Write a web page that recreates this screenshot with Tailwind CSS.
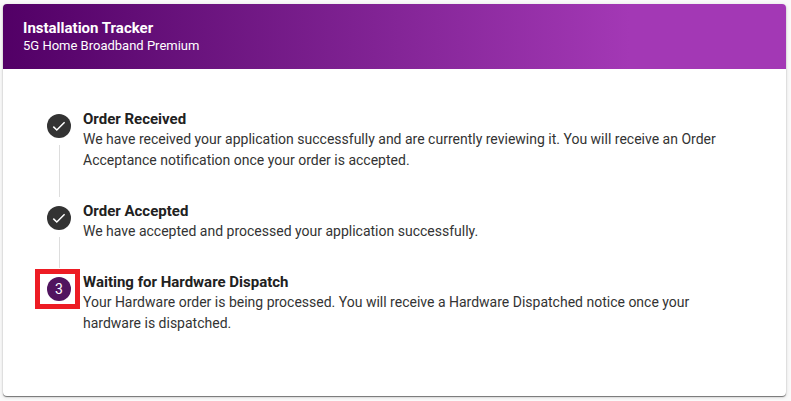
<!DOCTYPE html>
<html lang="en">
<head>
    <meta charset="UTF-8">
    <meta name="viewport" content="width=device-width, initial-scale=1.0">
    <title>Installation Tracker</title>
    <script src="https://cdn.jsdelivr.net/npm/@tailwindcss/browser@4"></script>
</head>
<body class="bg-[#fafafa] font-[Roboto,sans-serif] text-[#333333]">

    <main class="pt-1 pb-1 pl-[3px] pr-[5px]">
        <section class="bg-white rounded-sm overflow-hidden shadow-[0_1px_1px_rgba(0,0,0,0.5),0_1px_4px_rgba(0,0,0,0.15)]">

            <header class="bg-linear-to-r from-[#520066] to-[#a338b5] to-80% text-white px-5 pt-[14px] pb-[15px]">
                <h1 class="text-[15px] leading-5 font-bold">Installation Tracker</h1>
                <p class="text-[13px] leading-4">5G Home Broadband Premium</p>
            </header>

            <!-- Steps -->
            <ol class="pt-10 px-11 pb-8">
                <li class="flex gap-3">
                    <div class="flex flex-col items-center pt-[5px]">
                        <span class="size-6 shrink-0 rounded-full bg-[#333333] flex items-center justify-center">
                            <svg class="size-4" viewBox="0 0 16 16" fill="none" stroke="white" stroke-width="1.5" aria-label="Completed"><path d="M2.3 8.6 L5.8 12 L13.6 4.2"/></svg>
                        </span>
                        <span class="w-px grow bg-[#dddddd] mt-[7px] mb-1"></span>
                    </div>
                    <div class="pb-[30px]">
                        <h2 class="text-[15px] leading-5 font-bold text-[#212121]">Order Received</h2>
                        <p class="text-sm leading-[21px]">We have received your application successfully and are currently reviewing it. You will receive an Order Acceptance notification once your order is accepted.</p>
                    </div>
                </li>
                <li class="flex gap-3">
                    <div class="flex flex-col items-center pt-[5px]">
                        <span class="size-6 shrink-0 rounded-full bg-[#333333] flex items-center justify-center">
                            <svg class="size-4" viewBox="0 0 16 16" fill="none" stroke="white" stroke-width="1.5" aria-label="Completed"><path d="M2.3 8.6 L5.8 12 L13.6 4.2"/></svg>
                        </span>
                        <span class="w-px grow bg-[#dddddd] mt-[7px] mb-1"></span>
                    </div>
                    <div class="pb-[30px]">
                        <h2 class="text-[15px] leading-5 font-bold text-[#212121]">Order Accepted</h2>
                        <p class="text-sm leading-[21px]">We have accepted and processed your application successfully.</p>
                    </div>
                </li>
                <li class="flex gap-3">
                    <div class="pt-[5px]">
                        <span class="relative size-6 rounded-full bg-[#51145f] text-white text-sm flex items-center justify-center">
                            3
                            <span class="absolute -inset-y-2 -left-3 -right-[9px] border-5 border-[#ed1c24]"></span>
                        </span>
                    </div>
                    <div class="pb-[30px]">
                        <h2 class="text-[15px] leading-5 font-bold text-[#212121]">Waiting for Hardware Dispatch</h2>
                        <p class="text-sm leading-[21px]">Your Hardware order is being processed. You will receive a Hardware Dispatched notice once your hardware is dispatched.</p>
                    </div>
                </li>
            </ol>
        </section>
    </main>

</body>
</html>
